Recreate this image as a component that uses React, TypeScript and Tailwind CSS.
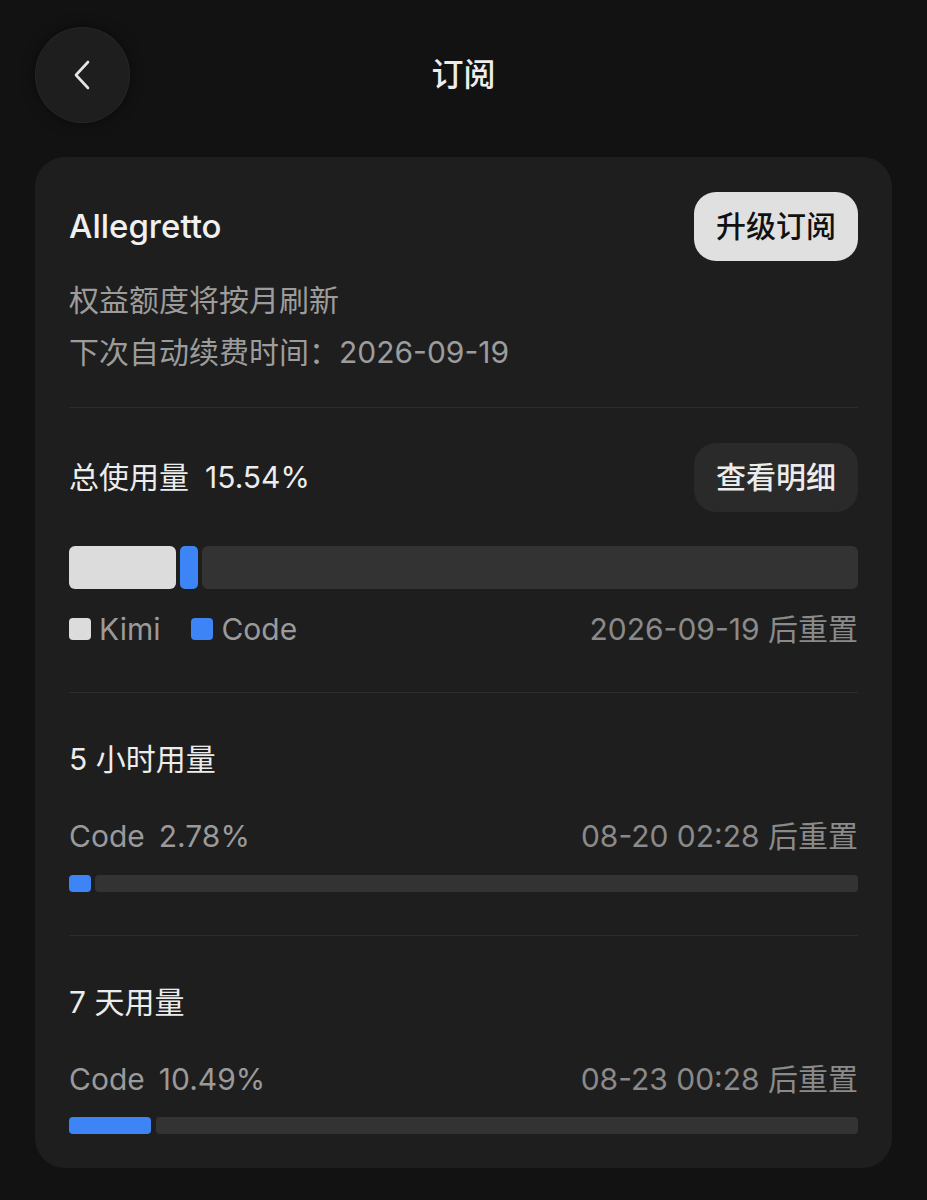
import React from "react";

export default function App() {
  const font = "font-['Inter','Noto_Sans_CJK_SC',sans-serif]";
  return (
    <div className={`min-h-[1200px] w-full bg-[#121212] ${font} text-[#ececec]`}>
      {/* header */}
      <div className="grid grid-cols-[93px_1fr_93px] items-center pl-[36px] pr-[36px] pt-[28px]">
        <div className="flex h-[94px] w-[93px] items-center justify-center rounded-full bg-[#1e1e1e] shadow-[0_0_14px_rgba(0,0,0,0.55)] ring-1 ring-[#262626]">
          <svg width="18" height="30" viewBox="0 0 18 30" fill="none" className="-ml-[2px]">
            <path d="M15 2 L3 15 L15 28" stroke="#e6e6e6" strokeWidth="2.6" strokeLinecap="round" strokeLinejoin="round" />
          </svg>
        </div>
        <div className="text-center text-[32px] font-medium leading-[40px] text-[#ededed]">订阅</div>
        <div />
      </div>

      {/* card */}
      <div className="mx-[35px] mt-[35px] rounded-[30px] bg-[#1e1e1e] px-[34px] pt-[35px] pb-[34px]">
        {/* section 1 */}
        <div className="border-b border-[#2d2d2d] pb-[29px]">
          <div className="flex h-[69px] items-center justify-between">
            <div className="text-[33px] font-medium text-[#f0f0f0]">Allegretto</div>
            <div className="flex h-[69px] w-[164px] items-center justify-center rounded-[22px] bg-[#e0e0e0] text-[30px] font-medium text-[#111]">
              升级订阅
            </div>
          </div>
          <div className="mt-[13px] text-[30px] leading-[52px] text-[#9c9c9c]">
            <div>权益额度将按月刷新</div>
            <div>下次自动续费时间：2026-09-19</div>
          </div>
        </div>

        {/* section 2 */}
        <div className="border-b border-[#2d2d2d] pt-[35px] pb-[42px]">
          <div className="flex h-[69px] items-center justify-between">
            <div className="text-[30px] text-[#ececec]">
              总使用量<span className="ml-[16px]">15.54%</span>
            </div>
            <div className="flex h-[69px] w-[164px] items-center justify-center rounded-[22px] bg-[#2a2a2a] text-[30px] font-medium text-[#ececec]">
              查看明细
            </div>
          </div>
          <div className="mt-[34px] flex h-[43px] gap-[4px]">
            <div className="w-[107px] rounded-[6px] bg-[#dcdcdc]" />
            <div className="w-[18px] rounded-[5px] bg-[#3d85f7]" />
            <div className="flex-1 rounded-[6px] bg-[#333333]" />
          </div>
          <div className="mt-[19px] flex h-[42px] items-center justify-between text-[30px] text-[#9a9a9a]">
            <div className="flex items-center">
              <div className="h-[22px] w-[22px] rounded-[4px] bg-[#dcdcdc]" />
              <span className="ml-[8px]">Kimi</span>
              <div className="ml-[31px] h-[22px] w-[22px] rounded-[4px] bg-[#3d85f7]" />
              <span className="ml-[8px]">Code</span>
            </div>
            <div className="text-[#8a8a8a]">2026-09-19 后重置</div>
          </div>
        </div>

        {/* section 3 */}
        <div className="border-b border-[#2d2d2d] pt-[45px] pb-[43px]">
          <div className="text-[30px] leading-[42px] text-[#ececec]">5 小时用量</div>
          <div className="mt-[35px] flex h-[42px] items-center justify-between text-[30px] text-[#9a9a9a]">
            <div>
              Code<span className="ml-[14px]">2.78%</span>
            </div>
            <div className="text-[#8a8a8a]">08-20 02:28 后重置</div>
          </div>
          <div className="mt-[18px] flex h-[17px] gap-[4px]">
            <div className="w-[22px] rounded-[4px] bg-[#3d85f7]" />
            <div className="flex-1 rounded-[4px] bg-[#333333]" />
          </div>
        </div>

        {/* section 4 */}
        <div className="pt-[45px]">
          <div className="text-[30px] leading-[42px] text-[#ececec]">7 天用量</div>
          <div className="mt-[35px] flex h-[42px] items-center justify-between text-[30px] text-[#9a9a9a]">
            <div>
              Code<span className="ml-[14px]">10.49%</span>
            </div>
            <div className="text-[#8a8a8a]">08-23 00:28 后重置</div>
          </div>
          <div className="mt-[17px] flex h-[17px] gap-[5px]">
            <div className="w-[82px] rounded-[4px] bg-[#3d85f7]" />
            <div className="flex-1 rounded-[4px] bg-[#333333]" />
          </div>
        </div>
      </div>
    </div>
  );
}
